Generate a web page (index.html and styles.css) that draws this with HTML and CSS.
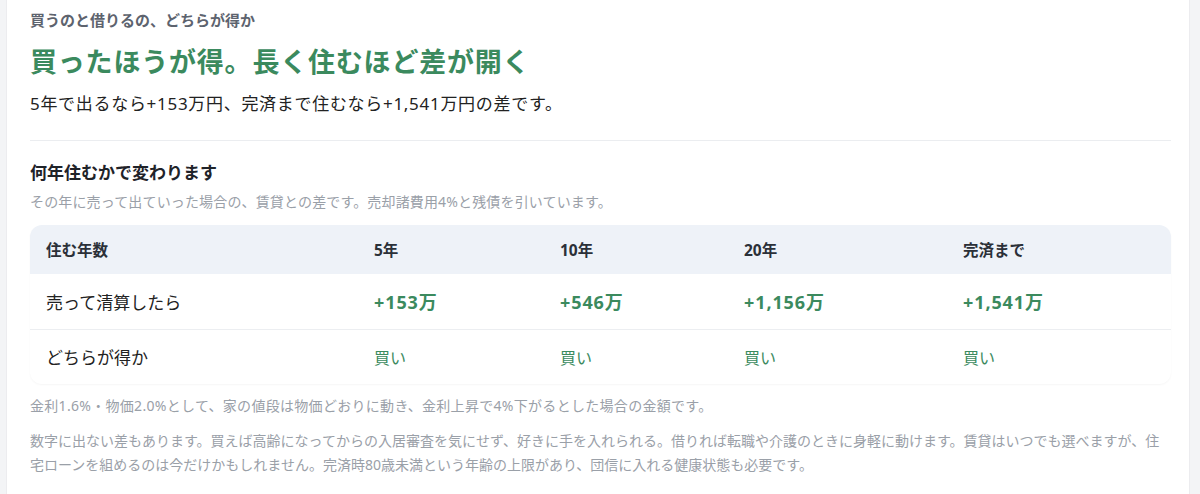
FILE: index.html
```html
<!DOCTYPE html>
<html lang="ja">
<head>
<meta charset="utf-8">
<link rel="stylesheet" href="styles.css">
</head>
<body>
<main class="card">
  <p class="eyebrow">買うのと借りるの、どちらが得か</p>
  <h1 class="headline">買ったほうが得。長く住むほど差が開く</h1>
  <p class="lead">5年で出るなら+153万円、完済まで住むなら+1,541万円の差です。</p>
  <hr class="divider">
  <h2 class="section-title">何年住むかで変わります</h2>
  <p class="section-note">その年に売って出ていった場合の、賃貸との差です。売却諸費用4%と残債を引いています。</p>
  <div class="table-wrap">
    <table class="compare">
      <colgroup>
        <col class="c-label"><col class="c-5"><col class="c-10"><col class="c-20"><col class="c-end">
      </colgroup>
      <thead>
        <tr><th>住む年数</th><th>5年</th><th>10年</th><th>20年</th><th>完済まで</th></tr>
      </thead>
      <tbody>
        <tr class="row-amount"><td>売って清算したら</td><td class="pos">+153万</td><td class="pos">+546万</td><td class="pos">+1,156万</td><td class="pos">+1,541万</td></tr>
        <tr class="row-winner"><td>どちらが得か</td><td class="win">買い</td><td class="win">買い</td><td class="win">買い</td><td class="win">買い</td></tr>
      </tbody>
    </table>
  </div>
  <p class="footnote">金利1.6%・物価2.0%として、家の値段は物価どおりに動き、金利上昇で4%下がるとした場合の金額です。</p>
  <p class="footnote footnote-long">数字に出ない差もあります。買えば高齢になってからの入居審査を気にせず、好きに手を入れられる。借りれば転職や介護のときに身軽に動けます。賃貸はいつでも選べますが、住宅ローンを組めるのは今だけかもしれません。完済時80歳未満という年齢の上限があり、団信に入れる健康状態も必要です。</p>
</main>
</body>
</html>
```

FILE: styles.css
```css
* { box-sizing: border-box; }
html, body { margin: 0; padding: 0; }
body {
  background: #f3f4f6;
  font-family: "Noto Sans", "Noto Sans CJK JP", "Liberation Sans", sans-serif;
  color: #222;
  padding: 0 10px 0 6px;
}
.card {
  background: #fff;
  border-left: 1px solid #ececef;
  border-right: 1px solid #ececef;
  padding: 8px 18px 20px 23px;
  min-height: 494px;
}
.eyebrow {
  margin: 0;
  font-size: 15px;
  font-weight: 700;
  color: #5d636e;
  line-height: 24px;
}
.headline {
  margin: 10px 0 0;
  font-size: 27px;
  font-weight: 700;
  color: #3b8a5e;
  line-height: 40px;
  letter-spacing: 0.8px;
}
.lead {
  margin: 10px 0 0;
  font-size: 17px;
  line-height: 24px;
  color: #222;
  letter-spacing: 0.7px;
}
.divider {
  border: 0;
  border-top: 1px solid #ebedf0;
  margin: 24px 0 0;
}
.section-title {
  margin: 20px 0 0;
  font-size: 17px;
  font-weight: 700;
  line-height: 24px;
  color: #1f2329;
}
.section-note {
  margin: 7px 0 0;
  font-size: 14px;
  line-height: 20px;
  color: #9aa0a8;
  letter-spacing: 0.15px;
}
.table-wrap {
  margin-top: 13px;
  border-radius: 12px;
  overflow: hidden;
  box-shadow: 0 1px 2px rgba(0,0,0,0.04);
}
.compare {
  width: 100%;
  border-collapse: collapse;
  table-layout: fixed;
}
.c-label { width: 328px; }
.c-5 { width: 186px; }
.c-10 { width: 184px; }
.c-20 { width: 219px; }
.compare th, .compare td {
  text-align: left;
  padding: 0 16px;
  font-size: 17px;
}
.compare thead th {
  background: #eef2f8;
  font-weight: 700;
  color: #2b3038;
  font-size: 15.5px;
  height: 49px;
}
.compare tbody td {
  height: 55px;
  color: #222;
}
.row-amount td { border-bottom: 1px solid #eceef1; }
.compare td.pos {
  color: #3b8a5e;
  font-weight: 700;
  font-size: 18px;
  letter-spacing: 0.9px;
}
.compare td.win {
  color: #3b8a5e;
  font-size: 16px;
}
.footnote {
  margin: 10px 0 0;
  font-size: 14px;
  line-height: 24px;
  color: #9aa0a8;
  letter-spacing: 0.3px;
}
.footnote-long {
  margin-top: 11px;
  letter-spacing: 0;
}
```
